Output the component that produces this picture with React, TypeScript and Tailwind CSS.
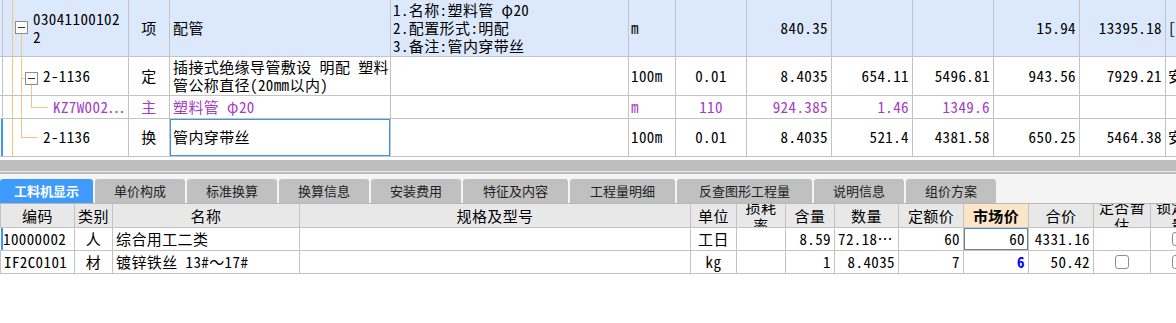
import React from "react";

const MONO =
  "font-['Noto_Sans_Mono_CJK_SC','Liberation_Mono','Noto_Sans_CJK_SC',monospace] text-[15px] tracking-[0.4px] text-black";
const LINE = "border-[#c3c3c3]";
const PURPLE = "text-[#a43cc2]";

type CellProps = {
  className?: string;
  children?: React.ReactNode;
  wrap?: boolean;
};

function Cell({ className = "", children, wrap }: CellProps) {
  return (
    <div
      className={`relative flex items-center overflow-hidden border-r border-b ${LINE} ${
        wrap ? "whitespace-normal" : "whitespace-nowrap"
      } ${className}`}
    >
      {children}
    </div>
  );
}

function VLine({ x, top = 0, bottom, height }: { x: number; top?: number; bottom?: number; height?: number }) {
  const style: React.CSSProperties = { left: x, top };
  if (height !== undefined) style.height = height;
  else style.bottom = bottom ?? -1;
  return <div className="absolute w-px bg-[#f5c583]" style={style} />;
}

function HLine({ x, y, width }: { x: number; y: number; width: number }) {
  return <div className="absolute h-px bg-[#f5c583]" style={{ left: x, top: y, width }} />;
}

function ExpandBox({ x, y }: { x: number; y: number }) {
  return (
    <div
      className="absolute flex h-[13px] w-[13px] items-center justify-center border border-[#8c8c8c] bg-white"
      style={{ left: x, top: y }}
    >
      <div className="h-px w-[7px] bg-[#333]" />
    </div>
  );
}

function LeftRule({ active }: { active?: boolean }) {
  return active ? (
    <div className="absolute left-[1px] top-0 bottom-[-1px] w-[2px] bg-[#3d94f5]" />
  ) : (
    <div className="absolute left-[2px] top-0 bottom-[-1px] w-px bg-[#c3c3c3]" />
  );
}

function Checkbox() {
  return <div className="h-[14px] w-[14px] rounded-[3px] border border-[#8f8f8f] bg-white" />;
}

const topCols =
  "grid grid-cols-[129px_41px_221px_238px_47px_71px_85px_81px_81px_86px_86px_60px]";
const lowCols =
  "grid grid-cols-[75px_38px_187px_391px_46px_49px_49px_64px_65px_65px_65px_57px_57px]";

const tabs = [
  { label: "工料机显示", w: 93, active: true },
  { label: "单价构成", w: 90 },
  { label: "标准换算", w: 90 },
  { label: "换算信息", w: 90 },
  { label: "安装费用", w: 90 },
  { label: "特征及内容", w: 105 },
  { label: "工程量明细", w: 105 },
  { label: "反查图形工程量", w: 135 },
  { label: "说明信息", w: 90 },
  { label: "组价方案", w: 90 },
];

const lowHeads = ["编码", "类别", "名称", "规格及型号", "单位", "损耗率", "含量", "数量", "定额价", "市场价", "合价", "定否暂估", "锁定含量"];

export default function App() {
  const num = "justify-end pr-[3px]";
  const mid = "justify-center";
  const left = "pl-[3px]";
  return (
    <div className={`h-[323px] w-[1176px] overflow-hidden bg-white ${MONO}`}>
      {/* upper grid */}
      <div className={`${topCols} w-[1236px]`}>
        {/* row 1 */}
        <Cell className="h-[57px] bg-[#dce8fb]">
          <LeftRule />
          <VLine x={12} />
          <ExpandBox x={15} y={21} />
          <VLine x={21} top={34} />
          <div className="pl-[33px] leading-[18px]">
            <div>03041100102</div>
            <div>2</div>
          </div>
        </Cell>
        <Cell className={`h-[57px] bg-[#dce8fb] ${mid}`}>项</Cell>
        <Cell className={`h-[57px] bg-[#dce8fb] ${left}`}>配管</Cell>
        <Cell className="h-[57px] bg-[#dce8fb] pl-[2px]">
          <div className="leading-[18px]">
            <div>1.名称:塑料管 φ20</div>
            <div>2.配置形式:明配</div>
            <div>3.备注:管内穿带丝</div>
          </div>
        </Cell>
        <Cell className="h-[57px] bg-[#dce8fb] pl-[2px]">m</Cell>
        <Cell className="h-[57px] bg-[#dce8fb]" />
        <Cell className={`h-[57px] bg-[#dce8fb] ${num}`}>840.35</Cell>
        <Cell className="h-[57px] bg-[#dce8fb]" />
        <Cell className="h-[57px] bg-[#dce8fb]" />
        <Cell className={`h-[57px] bg-[#dce8fb] ${num}`}>15.94</Cell>
        <Cell className={`h-[57px] bg-[#dce8fb] ${num}`}>13395.18</Cell>
        <Cell className="h-[57px] bg-[#dce8fb] pl-[2px]">[</Cell>

        {/* row 2 */}
        <Cell className="h-[39px]">
          <LeftRule />
          <VLine x={12} top={-1} />
          <VLine x={21} top={-1} />
          <HLine x={21} y={21} width={5} />
          <ExpandBox x={25} y={15} />
          <VLine x={31} top={28} />
          <span className="pl-[43px]">2-1136</span>
        </Cell>
        <Cell className={`h-[39px] ${mid}`}>定</Cell>
        <Cell className={`h-[39px] ${left}`}>
          <div className="leading-[18px]">
            <div>插接式绝缘导管敷设 明配 塑料</div>
            <div>管公称直径(20mm以内)</div>
          </div>
        </Cell>
        <Cell className="h-[39px]" />
        <Cell className="h-[39px] pl-[2px]">100m</Cell>
        <Cell className={`h-[39px] ${mid}`}>0.01</Cell>
        <Cell className={`h-[39px] ${num}`}>8.4035</Cell>
        <Cell className={`h-[39px] ${num}`}>654.11</Cell>
        <Cell className={`h-[39px] ${num}`}>5496.81</Cell>
        <Cell className={`h-[39px] ${num}`}>943.56</Cell>
        <Cell className={`h-[39px] ${num}`}>7929.21</Cell>
        <Cell className="h-[39px] pl-[2px]">安装</Cell>

        {/* row 3 */}
        <Cell className={`h-[23px] ${PURPLE}`}>
          <LeftRule />
          <VLine x={12} top={-1} />
          <VLine x={21} top={-1} />
          <VLine x={31} top={-1} height={12} />
          <HLine x={31} y={11} width={17} />
          <span className="pl-[53px]">KZ7W002…</span>
        </Cell>
        <Cell className={`h-[23px] ${mid} ${PURPLE}`}>主</Cell>
        <Cell className={`h-[23px] ${left} ${PURPLE}`}>塑料管 φ20</Cell>
        <Cell className="h-[23px]" />
        <Cell className={`h-[23px] pl-[2px] ${PURPLE}`}>m</Cell>
        <Cell className={`h-[23px] ${mid} ${PURPLE}`}>110</Cell>
        <Cell className={`h-[23px] ${num} ${PURPLE}`}>924.385</Cell>
        <Cell className={`h-[23px] ${num} ${PURPLE}`}>1.46</Cell>
        <Cell className={`h-[23px] ${num} ${PURPLE}`}>1349.6</Cell>
        <Cell className="h-[23px]" />
        <Cell className="h-[23px]" />
        <Cell className="h-[23px]" />

        {/* row 4 */}
        <Cell className="h-[38px]">
          <LeftRule active />
          <VLine x={12} top={-1} />
          <VLine x={21} top={-1} height={19} />
          <HLine x={21} y={18} width={17} />
          <span className="pl-[43px]">2-1136</span>
        </Cell>
        <Cell className={`h-[38px] ${mid}`}>换</Cell>
        <Cell className={`h-[38px] ${left}`}>
          <div className="absolute inset-[-1px] border-2 border-[#3d94f5]" />
          管内穿带丝
        </Cell>
        <Cell className="h-[38px]" />
        <Cell className="h-[38px] pl-[2px]">100m</Cell>
        <Cell className={`h-[38px] ${mid}`}>0.01</Cell>
        <Cell className={`h-[38px] ${num}`}>8.4035</Cell>
        <Cell className={`h-[38px] ${num}`}>521.4</Cell>
        <Cell className={`h-[38px] ${num}`}>4381.58</Cell>
        <Cell className={`h-[38px] ${num}`}>650.25</Cell>
        <Cell className={`h-[38px] ${num}`}>5464.38</Cell>
        <Cell className="h-[38px] pl-[2px]">安装</Cell>
      </div>

      {/* splitter */}
      <div className="h-[3px] bg-white" />
      <div className="h-[11px] bg-[#bebebe]" />
      <div className="h-px bg-[#ececec]" />
      <div className="h-[2px] bg-[#bebebe]" />
      <div className="h-[5px] bg-[#f4f4f4]" />

      {/* tabs */}
      <div className="flex h-[25px] gap-[2px] border-b border-[#b8b8b8] bg-[#f4f4f4] font-['Noto_Sans_CJK_SC',sans-serif] text-[13px] tracking-normal">
        {tabs.map((t) => (
          <div
            key={t.label}
            style={{ width: t.w }}
            className={
              t.active
                ? "flex h-[24px] shrink-0 items-center justify-center rounded-t-[3px] bg-[#3e9bfb] font-bold text-white"
                : "flex h-[24px] shrink-0 items-center justify-center rounded-t-[3px] bg-[#c0c0c0] text-[#222]"
            }
          >
            {t.label}
          </div>
        ))}
      </div>

      {/* lower grid */}
      <div className={`${lowCols} w-[1233px]`}>
        {lowHeads.map((h, i) => (
          <Cell
            key={h}
            wrap
            className={`h-[24px] justify-center px-[3px] text-center leading-[18px] ${
              i === 9 ? "bg-[#fde6c8] font-bold" : "bg-[#e8e8e8]"
            } ${i === 0 ? "border-l" : ""}`}
          >
            {h}
          </Cell>
        ))}

        {/* row 1 */}
        <Cell className={`h-[23px] ${left}`}>
          <div className="absolute left-[1px] top-0 bottom-[-1px] w-[2px] bg-[#3d94f5]" />
          10000002
        </Cell>
        <Cell className={`h-[23px] ${mid}`}>人</Cell>
        <Cell className={`h-[23px] ${left}`}>综合用工二类</Cell>
        <Cell className="h-[23px]" />
        <Cell className={`h-[23px] ${mid}`}>工日</Cell>
        <Cell className="h-[23px]" />
        <Cell className={`h-[23px] ${num}`}>8.59</Cell>
        <Cell className={`h-[23px] ${left}`}>72.18…</Cell>
        <Cell className={`h-[23px] ${num}`}>60</Cell>
        <Cell className={`h-[23px] ${num}`}>
          <div className="absolute inset-x-[-1px] top-[-1px] bottom-[-1px] border-2 border-[#7d7d7d] border-t-[#3d94f5]" />
          60
        </Cell>
        <Cell className={`h-[23px] ${num}`}>4331.16</Cell>
        <Cell className="h-[23px]" />
        <Cell className="h-[23px] pl-[21px]">
          <Checkbox />
        </Cell>

        {/* row 2 */}
        <Cell className={`h-[23px] ${left} border-l`}>IF2C0101</Cell>
        <Cell className={`h-[23px] ${mid}`}>材</Cell>
        <Cell className={`h-[23px] ${left}`}>镀锌铁丝 13#～17#</Cell>
        <Cell className="h-[23px]" />
        <Cell className={`h-[23px] ${mid}`}>kg</Cell>
        <Cell className="h-[23px]" />
        <Cell className={`h-[23px] ${num}`}>1</Cell>
        <Cell className={`h-[23px] ${num}`}>8.4035</Cell>
        <Cell className={`h-[23px] ${num}`}>7</Cell>
        <Cell className={`h-[23px] ${num} font-bold text-[#0000ff]`}>6</Cell>
        <Cell className={`h-[23px] ${num}`}>50.42</Cell>
        <Cell className={`h-[23px] ${mid}`}>
          <Checkbox />
        </Cell>
        <Cell className="h-[23px] pl-[21px]">
          <Checkbox />
        </Cell>
      </div>
    </div>
  );
}
